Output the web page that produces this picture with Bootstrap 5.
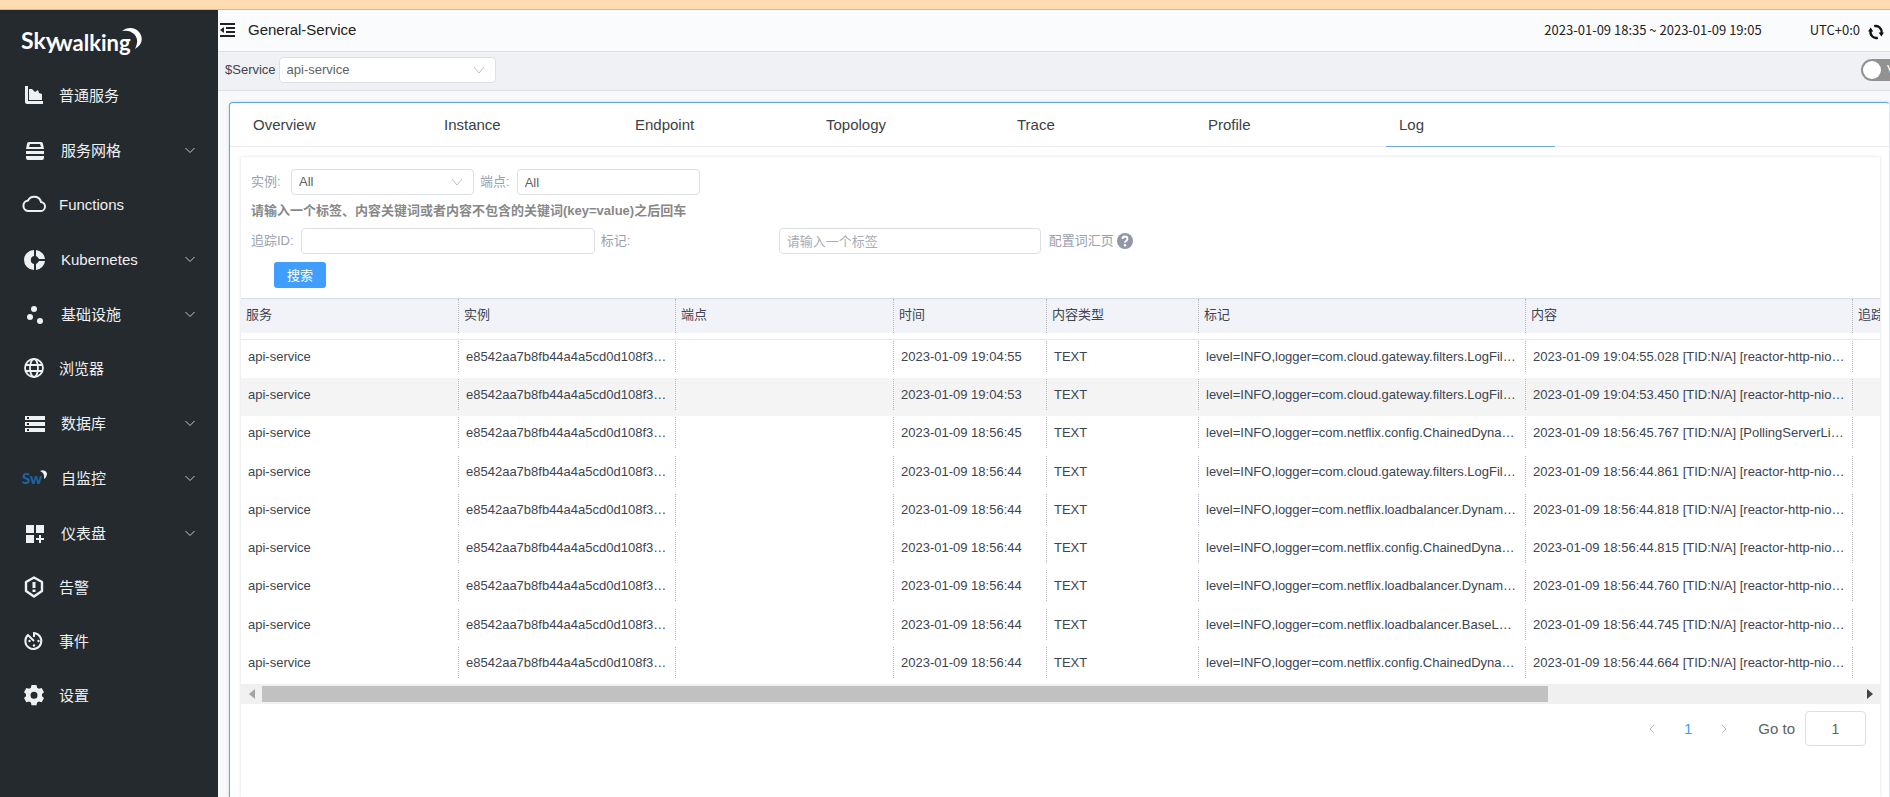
<!DOCTYPE html>
<html lang="zh-CN">
<head>
<meta charset="utf-8">
<meta name="viewport" content="width=device-width, initial-scale=1">
<title>General-Service</title>
<link rel="stylesheet" href="https://cdn.jsdelivr.net/npm/bootstrap@5.3.0/dist/css/bootstrap.min.css">
<style>
body{font-family:"Liberation Sans","Noto Sans CJK SC",sans-serif;font-size:13px;line-height:20px;color:#3d4450;background:#f7f9fa}
.strip{height:10px;background:#ffdcb2;border-bottom:1px solid #d3b8a0}
.side{width:218px;background:#252a2f}
.logo{height:59px}
.menu a{height:54px;color:#eef0f2;font-size:15px;padding:0 21px}
.menu a.has-sub{height:55px;padding-left:22px}
.menu .ico{width:26px;height:26px;margin-right:12px;fill:#eef0f2;flex:none}
.menu .has-sub .ico{margin-right:13px}
.chev{width:14px;height:9px;fill:none;stroke:#c9ccd0;stroke-width:1}
.head{height:42px;background:#fafbfd;border-bottom:1px solid #dcdee2;color:#222;padding:0 6px 2px 2px}
.head h1{font-size:15px;line-height:20px}
.when{font-family:"Noto Sans CJK SC",sans-serif}
.plain{border:0;background:none;padding:0;line-height:0}
.tools{height:39px;background:#f0f1f4;border-bottom:1px solid #dddfe3;padding:0 0 2px 7px}
.tools label{margin-right:3px}
.form-control,.form-select{height:26px;min-height:26px;font-size:13px;line-height:20px;padding:2px 7px;border:1px solid #dcdfe6;border-radius:4px;color:#606266;background-color:#fff}
.form-select{background-image:url("data:image/svg+xml,%3Csvg xmlns='http://www.w3.org/2000/svg' viewBox='0 0 12 8'%3E%3Cpath d='M1 1l5 6 5-6' fill='none' stroke='%23b9bcc3'/%3E%3C/svg%3E");background-size:12px 8px;background-position:right 10px center}
.form-control::placeholder{color:#a8abb2}
.w-svc{width:217px}.w-sel{width:183px}.w-id{width:294px}.w-tag{width:262px}
.tools .mode{width:29px;height:22px;margin-right:0;background:#929292;border-radius:11px 0 0 11px;overflow:hidden;color:#fff;padding-left:2px}
.mode input{appearance:none;width:18px;height:18px;border-radius:50%;background:#fff;margin:0;flex:none}
.mode span{margin-left:6px;font-size:13px}
.panel{margin:11px 0 0 11px;background:#fff;border:1px solid #62a4e6;border-bottom:0;border-right-color:#d6ebff;border-radius:4px 4px 0 0;box-shadow:0 0 3px #b5daff}
.tabs{height:44px;border-bottom:1px solid #e9ebee;padding-left:10px;gap:22px}
.tabs a{width:169px;padding-left:13px;font-size:15px;line-height:44px;color:#3b3f46;text-decoration:none;height:44px}
.tabs a.active{border-bottom:1px solid #6ea6ea}
.logs{margin:10px 9px 0 11px;box-shadow:0 0 3px #d9dbe0}
.lbl{color:#9a9fae}
.lbl svg{margin-left:2px}
.filters{padding:12px 10px 0 10px;height:141px}
.filters label{flex:none;margin-right:7px}
.filters .form-control + label,.filters .form-select + label{margin-left:6px}
.filters .w-inst{width:33px}
.filters .w-mark{width:171px}
.hint{color:#888;font-weight:700;line-height:20px;padding:6px 0 7px}
.btn-find{width:52px;height:26px;margin:8px 0 0 23px;background:#409eff;color:#fff;font-size:13px;padding:0;border-radius:3px;line-height:26px}
.grid-log{width:2046px;table-layout:fixed;border-collapse:separate;border-spacing:0;color:#3d4450}
.grid-log th,.grid-log td{padding:0;font-weight:400;white-space:nowrap}
.grid-log span{display:block;overflow:hidden;border-right:1px dotted #b3b6bb}
.grid-log th{border-top:1px solid #d8dbe6;border-bottom:6px solid #fff;background:#f1f3f9}
.grid-log th span{height:34px;line-height:32px;padding-left:5px}
.grid-log td{padding:1px 0 6px}
.grid-log td span{height:31px;line-height:32px;padding-left:7px}
.grid-log tbody tr:first-child td{border-top:1px solid #e6e7ea}
.grid-log tbody tr:nth-child(4n+3) td{padding-bottom:7px}
.grid-log tr.hover td{background:#f4f4f4}
.sbar{height:20px;background:#f0f0f0}
.sbar button{width:21px;height:20px}
.thumb{height:16px;background:#c1c1c1;width:80.5%}
.pager{font-size:15px;color:#606266;padding:7px 14px 0 0}
.pager .form-control{width:61px;height:35px;text-align:center;font-size:14px}
.pager label{margin:0 10px 0 30px}
.pager a{color:#409eff;text-decoration:none}
</style>
</head>
<body>
<div class="d-flex flex-column vh-100 overflow-hidden">
  <div class="strip flex-shrink-0"></div>
  <div class="d-flex flex-grow-1 overflow-hidden">
    <aside class="side flex-shrink-0">
      <div class="logo">
        <svg width="160" height="59" role="img" aria-label="Skywalking" fill="#fff" font-family="Lato, sans-serif" font-weight="700">
          <text x="21" y="39" font-size="23">Sky</text><text x="55" y="41" font-size="22">walking</text>
          <path d="M122 21c5-4 13-4 17 1 5 6 3 13-4 17 3-6 3-11-1-15-3-3-7-4-12-3z"/>
        </svg>
      </div>
      <nav class="menu nav flex-column flex-nowrap">
        <a href="#" class="d-flex align-items-center text-decoration-none"><svg class="ico" viewBox="0 0 26 26"><path d="M4 3h3v15h15v3H6q-2 0-2-2zM8 17V6l3 0 3 3 3-2 1 3 3 1v6z"/></svg>普通服务</a>
        <a href="#" class="has-sub d-flex align-items-center text-decoration-none"><svg class="ico" viewBox="0 0 26 26"><path d="M7 4h12q2 0 2 2l1 5H4l1-5q0-2 2-2zm1 2-1 3h12l-1-3zM4 13h18v3H4zm0 5h18v2q0 2-2 2H6q-2 0-2-2z" fill-rule="evenodd"/></svg>服务网格<svg class="chev ms-auto" viewBox="0 0 14 9"><path d="M2.500 2L7 6.500 11.500 2"/></svg></a>
        <a href="#" class="d-flex align-items-center text-decoration-none"><svg class="ico" viewBox="0 0 26 26"><path d="M7 19h12a4.500 4.500 0 0 0 1-9A7 7 0 0 0 7 8.500 5.300 5.300 0 0 0 7 19z" fill="none" stroke="#eef0f2" stroke-width="2"/></svg>Functions</a>
        <a href="#" class="has-sub d-flex align-items-center text-decoration-none"><svg class="ico" viewBox="0 0 26 26"><path d="M12 3v6a4.100 4.100 0 0 0 0 8v6A10 10 0 0 1 12 3zM14 3a10 10 0 0 1 9 9h-6q-1-2-3-3zM14 17q2-1 3-3h6a10 10 0 0 1-9 9z"/></svg>Kubernetes<svg class="chev ms-auto" viewBox="0 0 14 9"><path d="M2.500 2L7 6.500 11.500 2"/></svg></a>
        <a href="#" class="has-sub d-flex align-items-center text-decoration-none"><svg class="ico" viewBox="0 0 26 26"><circle cx="12" cy="7" r="3"/><circle cx="8" cy="15" r="3"/><circle cx="18" cy="19" r="3"/></svg>基础设施<svg class="chev ms-auto" viewBox="0 0 14 9"><path d="M2.500 2L7 6.500 11.500 2"/></svg></a>
        <a href="#" class="d-flex align-items-center text-decoration-none"><svg class="ico" viewBox="0 0 26 26"><g fill="none" stroke="#eef0f2" stroke-width="1.800"><circle cx="13" cy="12" r="9"/><ellipse cx="13" cy="12" rx="4" ry="9"/><path d="M5 9h16M5 15h16"/></g></svg>浏览器</a>
        <a href="#" class="has-sub d-flex align-items-center text-decoration-none"><svg class="ico" viewBox="0 0 26 26"><path d="M3 5h20v4H3zm2 1v2h2V6zM3 11h20v4H3zm2 1v2h2v-2zM3 17h20v4H3zm2 1v2h2v-2z" fill-rule="evenodd"/></svg>数据库<svg class="chev ms-auto" viewBox="0 0 14 9"><path d="M2.500 2L7 6.500 11.500 2"/></svg></a>
        <a href="#" class="has-sub d-flex align-items-center text-decoration-none"><svg class="ico" viewBox="0 0 26 26"><text x="0" y="18" font-family="Lato, sans-serif" font-weight="900" font-size="15" fill="#1c649f">Sw</text><path d="M18 5q5-2 7 2 0 4-3 6 1-6-4-8z"/></svg>自监控<svg class="chev ms-auto" viewBox="0 0 14 9"><path d="M2.500 2L7 6.500 11.500 2"/></svg></a>
        <a href="#" class="has-sub d-flex align-items-center text-decoration-none"><svg class="ico" viewBox="0 0 26 26"><path d="M4 4h8v8H4zM14 4h8v8h-8zM4 14h8v8H4zM17 14h2v3h3v2h-3v3h-2v-3h-3v-2h3z"/></svg>仪表盘<svg class="chev ms-auto" viewBox="0 0 14 9"><path d="M2.500 2L7 6.500 11.500 2"/></svg></a>
        <a href="#" class="d-flex align-items-center text-decoration-none"><svg class="ico" viewBox="0 0 26 26"><path d="M13 2.500l8 4.500v9l-8 5.500L5 16V7z" fill="none" stroke="#eef0f2" stroke-width="2.400" stroke-linejoin="round"/><path d="M11.500 7h3v6h-3zM11.500 14.500h3v2.500h-3z"/></svg>告警</a>
        <a href="#" class="d-flex align-items-center text-decoration-none"><svg class="ico" viewBox="0 0 26 26"><path d="M13 8V4a8 8 0 1 1-6 2l6 6" fill="none" stroke="#eef0f2" stroke-width="2"/><circle cx="8.500" cy="12" r="1.200"/><circle cx="17.500" cy="12" r="1.200"/><circle cx="13" cy="16.500" r="1.200"/></svg>事件</a>
        <a href="#" class="d-flex align-items-center text-decoration-none"><svg class="ico" viewBox="0 0 26 26"><path d="M10.500 2h5l.6 2.800 1.800 1 2.800-.8 2.300 4.200-2 1.900v2.100l2 1.900-2.300 4.200-2.800-.8-1.800 1-.6 2.700h-5l-.6-2.700-1.800-1-2.800.8L3 15.100l2-1.900v-2.100L3 9.200 5.300 5l2.800.8 1.800-1zM13 8.700a3.500 3.500 0 1 0 0 7 3.500 3.500 0 0 0 0-7z" fill-rule="evenodd"/></svg>设置</a>
      </nav>
    </aside>
    <main class="flex-grow-1 d-flex flex-column overflow-hidden">
      <header class="head d-flex align-items-center flex-shrink-0">
        <button class="plain" aria-label="collapse"><svg width="16" height="16" viewBox="0 0 16 16"><path d="M0 1h15v2H0zM6 5h9v2H6zM6 9h9v2H6zM0 13h15v2H0zM4 5v6L0 8z" fill="#222"/></svg></button>
        <h1 class="mb-0 fw-normal ms-2 ps-1">General-Service</h1>
        <time class="when ms-auto me-5">2023-01-09 18:35 ~ 2023-01-09 19:05</time>
        <span class="when me-2">UTC+0:0</span>
        <button class="plain pt-1" aria-label="refresh"><svg width="16" height="16" viewBox="0 0 18 18" fill="none" stroke="#111" stroke-width="2.600"><path d="M7 2.500a6.500 6.500 0 0 1 8 8M11 15.500a6.500 6.500 0 0 1-8-8"/><path d="M12 9.500h6L15 14zM0 8.500h6L3 4z" fill="#111" stroke="none"/></svg></button>
      </header>
      <div class="tools d-flex align-items-center flex-shrink-0">
        <label for="svc">$Service</label>
        <select id="svc" class="form-select w-svc"><option>api-service</option></select>
        <label class="mode d-flex align-items-center ms-auto"><input type="checkbox" role="switch"><span>V</span></label>
      </div>
      <section class="panel flex-grow-1 d-flex flex-column overflow-hidden">
        <nav class="tabs d-flex flex-shrink-0">
          <a href="#">Overview</a><a href="#">Instance</a><a href="#">Endpoint</a><a href="#">Topology</a><a href="#">Trace</a><a href="#">Profile</a><a href="#" class="active">Log</a>
        </nav>
        <div class="logs flex-grow-1">
          <form class="filters">
            <div class="d-flex align-items-center">
              <label class="lbl w-inst" for="inst">实例:</label>
              <select id="inst" class="form-select w-sel"><option>All</option></select>
              <label class="lbl" for="endp">端点:</label>
              <input id="endp" class="form-control w-sel" value="All">
            </div>
            <div class="hint">请输入一个标签、内容关键词或者内容不包含的关键词(key=value)之后回车</div>
            <div class="d-flex align-items-center">
              <label class="lbl" for="tid">追踪ID:</label>
              <input id="tid" class="form-control w-id">
              <label class="lbl w-mark" for="tag">标记:</label>
              <input id="tag" class="form-control w-tag" placeholder="请输入一个标签">
              <a href="#" class="lbl ms-2 text-decoration-none d-flex align-items-center">配置词汇页<svg width="18" height="18" viewBox="0 0 18 18" fill="#9297a8"><circle cx="9" cy="9" r="8"/><path d="M6.500 7q0-2.500 2.500-2.500T11.500 7q0 1-1.500 2-1 .6-1 1.800" fill="none" stroke="#fff" stroke-width="1.800"/><circle cx="9" cy="13.200" r="1.200" fill="#fff"/></svg></a>
            </div>
            <button type="button" class="btn btn-find">搜索</button>
          </form>
          <div class="overflow-hidden">
            <table class="grid-log">
              <colgroup><col style="width:218px"><col style="width:217px"><col style="width:218px"><col style="width:153px"><col style="width:152px"><col style="width:327px"><col style="width:327px"><col></colgroup>
              <thead><tr><th><span>服务</span></th><th><span>实例</span></th><th><span>端点</span></th><th><span>时间</span></th><th><span>内容类型</span></th><th><span>标记</span></th><th><span>内容</span></th><th><span>追踪ID</span></th></tr></thead>
              <tbody>
                <tr><td><span>api-service</span></td><td><span>e8542aa7b8fb44a4a5cd0d108f3…</span></td><td><span></span></td><td><span>2023-01-09 19:04:55</span></td><td><span>TEXT</span></td><td><span>level=INFO,logger=com.cloud.gateway.filters.LogFil…</span></td><td><span>2023-01-09 19:04:55.028 [TID:N/A] [reactor-http-nio…</span></td><td><span></span></td></tr>
                <tr class="hover"><td><span>api-service</span></td><td><span>e8542aa7b8fb44a4a5cd0d108f3…</span></td><td><span></span></td><td><span>2023-01-09 19:04:53</span></td><td><span>TEXT</span></td><td><span>level=INFO,logger=com.cloud.gateway.filters.LogFil…</span></td><td><span>2023-01-09 19:04:53.450 [TID:N/A] [reactor-http-nio…</span></td><td><span></span></td></tr>
                <tr><td><span>api-service</span></td><td><span>e8542aa7b8fb44a4a5cd0d108f3…</span></td><td><span></span></td><td><span>2023-01-09 18:56:45</span></td><td><span>TEXT</span></td><td><span>level=INFO,logger=com.netflix.config.ChainedDyna…</span></td><td><span>2023-01-09 18:56:45.767 [TID:N/A] [PollingServerLi…</span></td><td><span></span></td></tr>
                <tr><td><span>api-service</span></td><td><span>e8542aa7b8fb44a4a5cd0d108f3…</span></td><td><span></span></td><td><span>2023-01-09 18:56:44</span></td><td><span>TEXT</span></td><td><span>level=INFO,logger=com.cloud.gateway.filters.LogFil…</span></td><td><span>2023-01-09 18:56:44.861 [TID:N/A] [reactor-http-nio…</span></td><td><span></span></td></tr>
                <tr><td><span>api-service</span></td><td><span>e8542aa7b8fb44a4a5cd0d108f3…</span></td><td><span></span></td><td><span>2023-01-09 18:56:44</span></td><td><span>TEXT</span></td><td><span>level=INFO,logger=com.netflix.loadbalancer.Dynam…</span></td><td><span>2023-01-09 18:56:44.818 [TID:N/A] [reactor-http-nio…</span></td><td><span></span></td></tr>
                <tr><td><span>api-service</span></td><td><span>e8542aa7b8fb44a4a5cd0d108f3…</span></td><td><span></span></td><td><span>2023-01-09 18:56:44</span></td><td><span>TEXT</span></td><td><span>level=INFO,logger=com.netflix.config.ChainedDyna…</span></td><td><span>2023-01-09 18:56:44.815 [TID:N/A] [reactor-http-nio…</span></td><td><span></span></td></tr>
                <tr><td><span>api-service</span></td><td><span>e8542aa7b8fb44a4a5cd0d108f3…</span></td><td><span></span></td><td><span>2023-01-09 18:56:44</span></td><td><span>TEXT</span></td><td><span>level=INFO,logger=com.netflix.loadbalancer.Dynam…</span></td><td><span>2023-01-09 18:56:44.760 [TID:N/A] [reactor-http-nio…</span></td><td><span></span></td></tr>
                <tr><td><span>api-service</span></td><td><span>e8542aa7b8fb44a4a5cd0d108f3…</span></td><td><span></span></td><td><span>2023-01-09 18:56:44</span></td><td><span>TEXT</span></td><td><span>level=INFO,logger=com.netflix.loadbalancer.BaseL…</span></td><td><span>2023-01-09 18:56:44.745 [TID:N/A] [reactor-http-nio…</span></td><td><span></span></td></tr>
                <tr><td><span>api-service</span></td><td><span>e8542aa7b8fb44a4a5cd0d108f3…</span></td><td><span></span></td><td><span>2023-01-09 18:56:44</span></td><td><span>TEXT</span></td><td><span>level=INFO,logger=com.netflix.config.ChainedDyna…</span></td><td><span>2023-01-09 18:56:44.664 [TID:N/A] [reactor-http-nio…</span></td><td><span></span></td></tr>
              </tbody>
            </table>
          </div>
          <div class="sbar d-flex align-items-center">
            <button class="plain" aria-label="scroll left"><svg width="8" height="12"><path d="M7 1v10L1 6z" fill="#a3a3a3"/></svg></button>
            <div class="flex-grow-1"><div class="thumb"></div></div>
            <button class="plain" aria-label="scroll right"><svg width="8" height="12"><path d="M1 1v10l6-5z" fill="#444"/></svg></button>
          </div>
          <div class="pager d-flex align-items-center justify-content-end">
            <button class="plain" aria-label="previous page"><svg width="8" height="12" fill="none" stroke="#b4b7bd"><path d="M6 2L2 6l4 4"/></svg></button>
            <a href="#" class="px-4 mx-1">1</a>
            <button class="plain" aria-label="next page"><svg width="8" height="12" fill="none" stroke="#b4b7bd"><path d="M2 2l4 4-4 4"/></svg></button>
            <label for="goto">Go to</label>
            <input id="goto" class="form-control" value="1">
          </div>
        </div>
      </section>
    </main>
  </div>
</div>
<script src="https://cdn.jsdelivr.net/npm/bootstrap@5.3.0/dist/js/bootstrap.bundle.min.js"></script>
</body>
</html>
